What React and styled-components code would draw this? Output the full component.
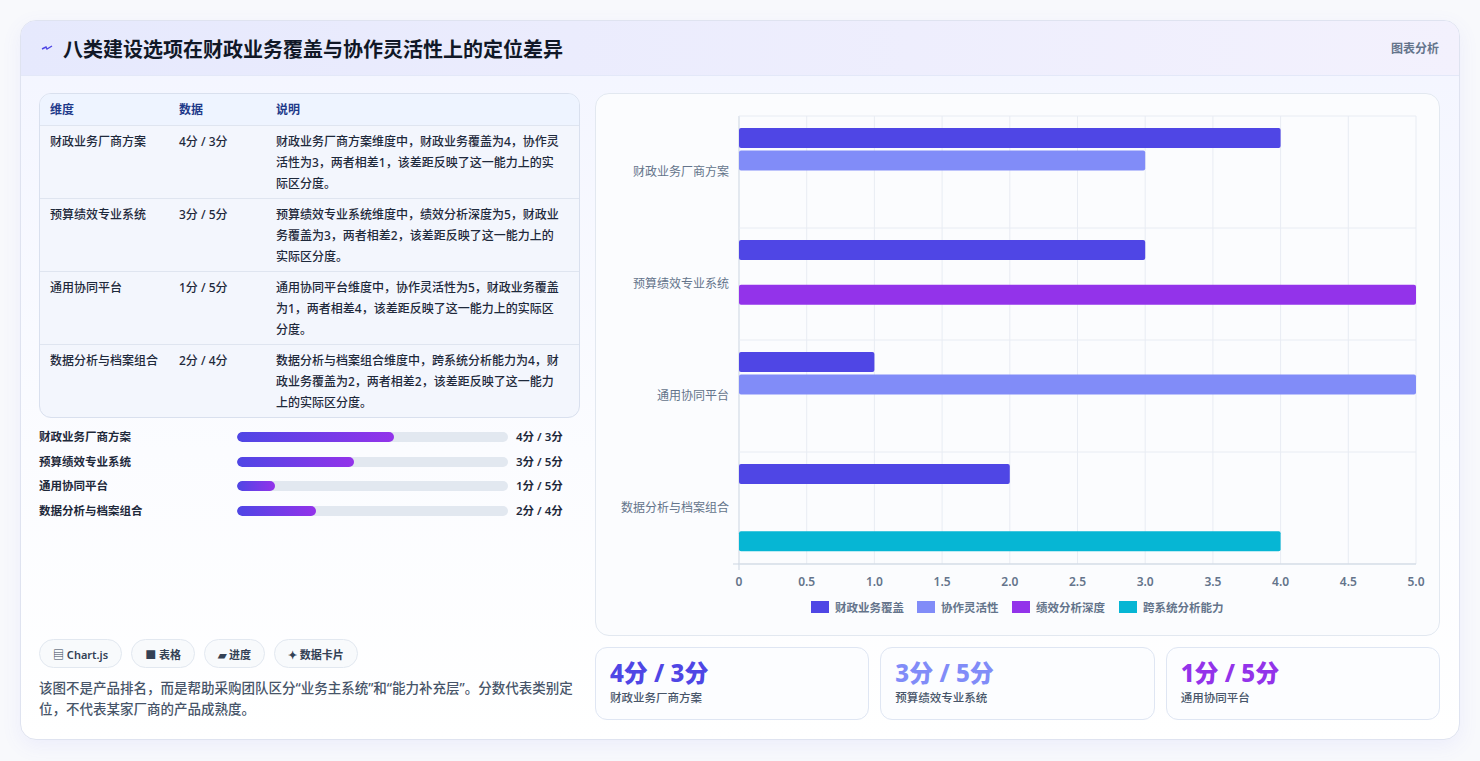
import styled, { createGlobalStyle } from "styled-components";

const Global = createGlobalStyle`
  body { margin: 0; background: #f8f9fc; font-family: "Noto Sans", "Noto Sans CJK SC", sans-serif; color: #1e293b; }
`;

const Page = styled.div`
  padding: 20px;
  height: 761px;
  box-sizing: border-box;
`;

const Card = styled.section`
  width: 1440px;
  height: 720px;
  box-sizing: border-box;
  border: 1px solid #dfe3f0;
  border-radius: 16px;
  background: linear-gradient(180deg, #f3f5ff 0%, #fbfcff 60%, #ffffff 100%);
  box-shadow: 0 6px 20px rgba(99, 102, 241, 0.08);
  overflow: hidden;
  display: flex;
  flex-direction: column;
`;

const Header = styled.header`
  height: 55px;
  display: flex;
  align-items: center;
  justify-content: space-between;
  padding: 0 20px 0 20px;
  background: linear-gradient(90deg, #e6e9fd, #f3f1fd);
  border-bottom: 1px solid #e3e8f8;
`;

const Title = styled.h1`
  margin: 0;
  font-size: 20px;
  font-weight: 700;
  color: #111827;
  display: flex;
  align-items: center;
  gap: 10px;
`;

const HeaderTag = styled.span`
  font-size: 12px;
  color: #64748b;
  font-weight: 600;
`;

const Body = styled.div`
  flex: 1;
  display: grid;
  grid-template-columns: 541px 845px;
  gap: 15px;
  padding: 17px 19px 19px 18px;
`;

const Left = styled.div`
  display: flex;
  flex-direction: column;
`;

const Table = styled.div`
  border: 1px solid #d9e0ee;
  border-radius: 12px;
  overflow: hidden;
  background: #f3f6fd;
`;

const Row = styled.div`
  display: grid;
  grid-template-columns: 129px 97px 1fr;
  padding: ${(p) => (p.$head ? "5px 10px" : "5px 10px 4px")};
  border-top: ${(p) => (p.$head ? "none" : "1px solid #dfe5f0")};
  background: ${(p) => (p.$head ? "#eef4ff" : "transparent")};
  font-size: 12px;
  line-height: 21px;
  color: ${(p) => (p.$head ? "#1e3a8a" : "#1e293b")};
  font-weight: ${(p) => (p.$head ? 600 : 500)};
`;

const Desc = styled.div`
  padding-right: 4px;
`;

const Bars = styled.div`
  display: flex;
  flex-direction: column;
  gap: 6px;
  margin-top: 10px;
`;

const BarRow = styled.div`
  display: grid;
  grid-template-columns: 198px 271px 1fr;
  align-items: center;
  font-size: 11.5px;
  font-weight: 600;
  line-height: 18.5px;
`;

const Track = styled.div`
  height: 10px;
  border-radius: 5px;
  background: #e2e8f0;
  overflow: hidden;
`;

const Fill = styled.div`
  height: 100%;
  border-radius: 5px;
  background: linear-gradient(90deg, #4f46e5, #9333ea);
`;

const BarValue = styled.span`
  padding-left: 8px;
`;

const Spacer = styled.div`
  flex: 1;
`;

const Tags = styled.div`
  display: flex;
  gap: 9px;
`;

const Tag = styled.span`
  height: 29px;
  box-sizing: border-box;
  padding: 0 13px;
  border: 1px solid #e2e8f0;
  border-radius: 15px;
  background: #f8fafc;
  font-size: 11px;
  font-weight: 600;
  color: #334155;
  display: inline-flex;
  align-items: center;
  gap: 3px;
`;

const Note = styled.p`
  margin: 10px 0 0;
  font-size: 13.5px;
  line-height: 21px;
  color: #475569;
  font-weight: 500;
`;

const Right = styled.div`
  display: flex;
  flex-direction: column;
  gap: 11px;
`;

const ChartCard = styled.div`
  height: 543px;
  box-sizing: border-box;
  border: 1px solid #e2e8f0;
  border-radius: 14px;
  background: #fbfcfe;
`;

const Stats = styled.div`
  display: grid;
  grid-template-columns: repeat(3, 1fr);
  gap: 11px;
`;

const Stat = styled.div`
  height: 73px;
  box-sizing: border-box;
  border: 1px solid #dfe6f3;
  border-radius: 12px;
  background: #fcfdff;
  padding: 10px 14px;
`;

const StatValue = styled.div`
  font-size: 24px;
  font-weight: 800;
  line-height: 30px;
  color: ${(p) => p.$color};
`;

const StatLabel = styled.div`
  font-size: 11.5px;
  color: #475569;
  font-weight: 500;
  margin-top: 1px;
`;

const rows = [
  ["财政业务厂商方案", "4分 / 3分", "财政业务厂商方案维度中，财政业务覆盖为4，协作灵活性为3，两者相差1，该差距反映了这一能力上的实际区分度。", 58],
  ["预算绩效专业系统", "3分 / 5分", "预算绩效专业系统维度中，绩效分析深度为5，财政业务覆盖为3，两者相差2，该差距反映了这一能力上的实际区分度。", 43],
  ["通用协同平台", "1分 / 5分", "通用协同平台维度中，协作灵活性为5，财政业务覆盖为1，两者相差4，该差距反映了这一能力上的实际区分度。", 14],
  ["数据分析与档案组合", "2分 / 4分", "数据分析与档案组合维度中，跨系统分析能力为4，财政业务覆盖为2，两者相差2，该差距反映了这一能力上的实际区分度。", 29],
];

const C = ["#4f46e5", "#818cf8", "#9333ea", "#06b6d4"];
const X0 = 143, UNIT = 135.4, TOP = 22, CAT = 112;
const bars = [
  [0, 0, 4], [0, 1, 3],
  [1, 0, 3], [1, 2, 5],
  [2, 0, 1], [2, 1, 5],
  [3, 0, 2], [3, 3, 4],
];
const cats = ["财政业务厂商方案", "预算绩效专业系统", "通用协同平台", "数据分析与档案组合"];
const legend = ["财政业务覆盖", "协作灵活性", "绩效分析深度", "跨系统分析能力"];

function Chart() {
  const ticks = [0, 0.5, 1, 1.5, 2, 2.5, 3, 3.5, 4, 4.5, 5];
  const axisY = TOP + CAT * 4;
  const lw = [96, 85, 97, 100];
  let lx = 215;
  return (
    <svg width="843" height="541" viewBox="0 0 843 541" fontFamily='"Noto Sans", "Noto Sans CJK SC", sans-serif'>
      {ticks.map((t) => (
        <line key={t} x1={X0 + t * UNIT} x2={X0 + t * UNIT} y1={TOP} y2={axisY + (t === 0 ? 6 : 0)} stroke={t === 0 ? "#cbd5e1" : "#e8ecf3"} />
      ))}
      {[0, 1, 2, 3, 4].map((i) => (
        <line key={i} x1={X0} x2={X0 + 5 * UNIT} y1={TOP + i * CAT} y2={TOP + i * CAT} stroke="#e8ecf3" />
      ))}
      <line x1={X0 - 6} x2={X0 + 5 * UNIT} y1={axisY} y2={axisY} stroke="#cbd5e1" />
      {bars.map(([c, s, v], i) => (
        <rect key={i} x={X0} y={TOP + c * CAT + 12 + s * 22.4} width={v * UNIT} height={20} rx={2} fill={C[s]} />
      ))}
      {cats.map((c, i) => (
        <text key={c} x={X0 - 10} y={TOP + i * CAT + 60} textAnchor="end" fontSize="12" fill="#64748b">{c}</text>
      ))}
      {ticks.map((t) => (
        <text key={t} x={X0 + t * UNIT} y={axisY + 22} textAnchor="middle" fontSize="12" fontWeight="600" fill="#64748b">{t === 0 ? "0" : t.toFixed(1)}</text>
      ))}
      {legend.map((l, i) => {
        const x = lx;
        lx += lw[i] + 10;
        return (
          <g key={l}>
            <rect x={x} y={507} width={18} height={12} fill={C[i]} />
            <text x={x + 24} y={518} fontSize="11.5" fontWeight="600" fill="#64748b">{l}</text>
          </g>
        );
      })}
    </svg>
  );
}

export default function App() {
  return (
    <Page>
      <Global />
      <Card>
        <Header>
          <Title>
            <svg width="12" height="10" viewBox="0 0 12 10">
              <path d="M1 6 L5 4 L6 6 L11 3" stroke="#4f46e5" strokeWidth="1.4" fill="none" />
            </svg>
            八类建设选项在财政业务覆盖与协作灵活性上的定位差异
          </Title>
          <HeaderTag>图表分析</HeaderTag>
        </Header>
        <Body>
          <Left>
            <Table>
              <Row $head>
                <div>维度</div>
                <div>数据</div>
                <div>说明</div>
              </Row>
              {rows.map(([a, b, c]) => (
                <Row key={a}>
                  <div>{a}</div>
                  <div>{b}</div>
                  <Desc>{c}</Desc>
                </Row>
              ))}
            </Table>
            <Bars>
              {rows.map(([a, b, , w]) => (
                <BarRow key={a}>
                  <span>{a}</span>
                  <Track>
                    <Fill style={{ width: `${w}%` }} />
                  </Track>
                  <BarValue>{b}</BarValue>
                </BarRow>
              ))}
            </Bars>
            <Spacer />
            <Tags>
              <Tag>▤ Chart.js</Tag>
              <Tag>■ 表格</Tag>
              <Tag>▰ 进度</Tag>
              <Tag>✦ 数据卡片</Tag>
            </Tags>
            <Note>该图不是产品排名，而是帮助采购团队区分“业务主系统”和“能力补充层”。分数代表类别定位，不代表某家厂商的产品成熟度。</Note>
          </Left>
          <Right>
            <ChartCard>
              <Chart />
            </ChartCard>
            <Stats>
              <Stat>
                <StatValue $color="#4f46e5">4分 / 3分</StatValue>
                <StatLabel>财政业务厂商方案</StatLabel>
              </Stat>
              <Stat>
                <StatValue $color="#818cf8">3分 / 5分</StatValue>
                <StatLabel>预算绩效专业系统</StatLabel>
              </Stat>
              <Stat>
                <StatValue $color="#9333ea">1分 / 5分</StatValue>
                <StatLabel>通用协同平台</StatLabel>
              </Stat>
            </Stats>
          </Right>
        </Body>
      </Card>
    </Page>
  );
}
